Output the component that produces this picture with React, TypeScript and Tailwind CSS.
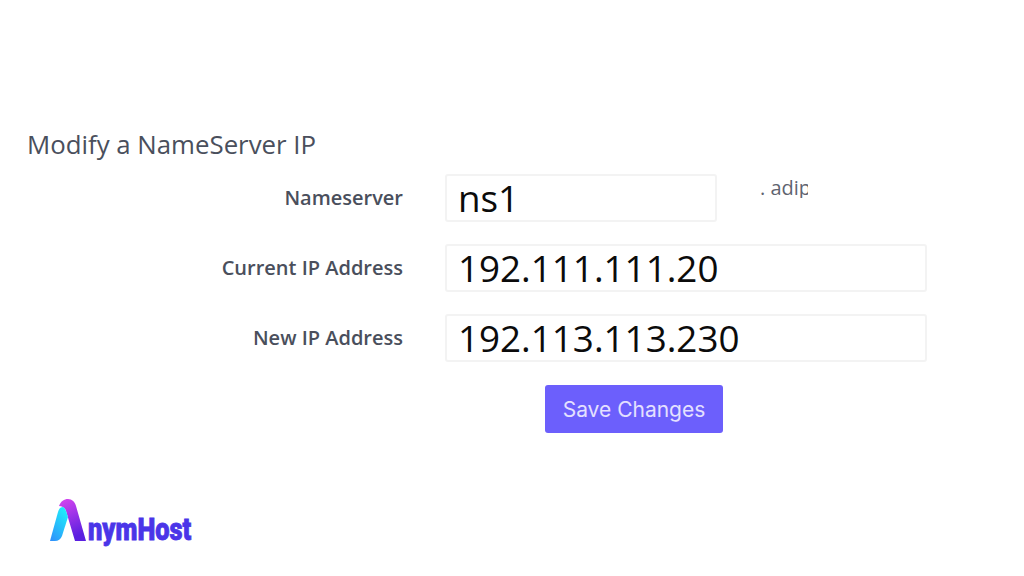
import React from 'react';

const labelClass = "w-[403px] shrink-0 text-right text-[20px] font-semibold text-[#4a4f5c] leading-none";
const inputClass = "h-[48px] shrink-0 ml-[42px] pl-[11px] flex items-center bg-white border-2 border-[#f3f3f3] rounded-[3px] text-[36.8px] text-[#0b0b0b] leading-none";

function Logo() {
  return (
    <div className="ml-[50px] mt-[66px] flex items-end h-[42px]">
      <svg width="36" height="42" viewBox="0 0 36 42" className="shrink-0">
        <defs>
          <linearGradient id="cyanLeg" x1="0" y1="1" x2="0.6" y2="0">
            <stop offset="0" stopColor="#2f8dfb" />
            <stop offset="1" stopColor="#1fe9fb" />
          </linearGradient>
          <linearGradient id="purpleLeg" x1="0" y1="0" x2="0.3" y2="1">
            <stop offset="0" stopColor="#d946ef" />
            <stop offset="1" stopColor="#5b1fe0" />
          </linearGradient>
        </defs>
        <path d="M9 7 C11 2 14 0 18 0 C22 0 25 3 26 7 L36 42 L25 42 L16 12 C15 9 12 7 9 7 Z" fill="url(#purpleLeg)" />
        <path d="M13 8 C10 8 9 10 8 13 L0 42 L5 42 C8 42 11 40 12 37 L18 18 L16 12 C15 10 14 8 13 8 Z" fill="url(#cyanLeg)" />
      </svg>
      <span className="ml-[2px] mb-[-4px] inline-block origin-left scale-x-[0.82] text-[31px] font-black leading-[30px] text-[#4a35e8] [-webkit-text-stroke:0.8px_#4a35e8] font-['Roboto',sans-serif]">
        nymHost
      </span>
    </div>
  );
}

export default function App() {
  return (
    <div className="w-[1024px] h-[576px] overflow-hidden bg-white font-['Open_Sans',sans-serif] pt-[127px]">
      <h2 className="pl-[27px] text-[25.8px] leading-[34px] text-[#4a4f5c]">Modify a NameServer IP</h2>

      <div className="mt-[13px] flex flex-col gap-[22px]">
        <div className="flex items-center">
          <label className={labelClass}>Nameserver</label>
          <div className={`${inputClass} w-[272px]`}>ns1</div>
          <span className="ml-[43px] mb-[20px] w-[48px] overflow-hidden whitespace-nowrap text-[20px] leading-none text-[#5f6470]">
            . adip
          </span>
        </div>
        <div className="flex items-center">
          <label className={labelClass}>Current IP Address</label>
          <div className={`${inputClass} w-[482px]`}>192.111.111.20</div>
        </div>
        <div className="flex items-center">
          <label className={labelClass}>New IP Address</label>
          <div className={`${inputClass} w-[482px]`}>192.113.113.230</div>
        </div>
      </div>

      <button className="block ml-[545px] mt-[23px] w-[178px] h-[48px] rounded-[3px] bg-[#6c5ffc] text-[21px] text-[#e4e0ff] font-['Inter',sans-serif] leading-none">
        Save Changes
      </button>

      <Logo />
    </div>
  );
}
